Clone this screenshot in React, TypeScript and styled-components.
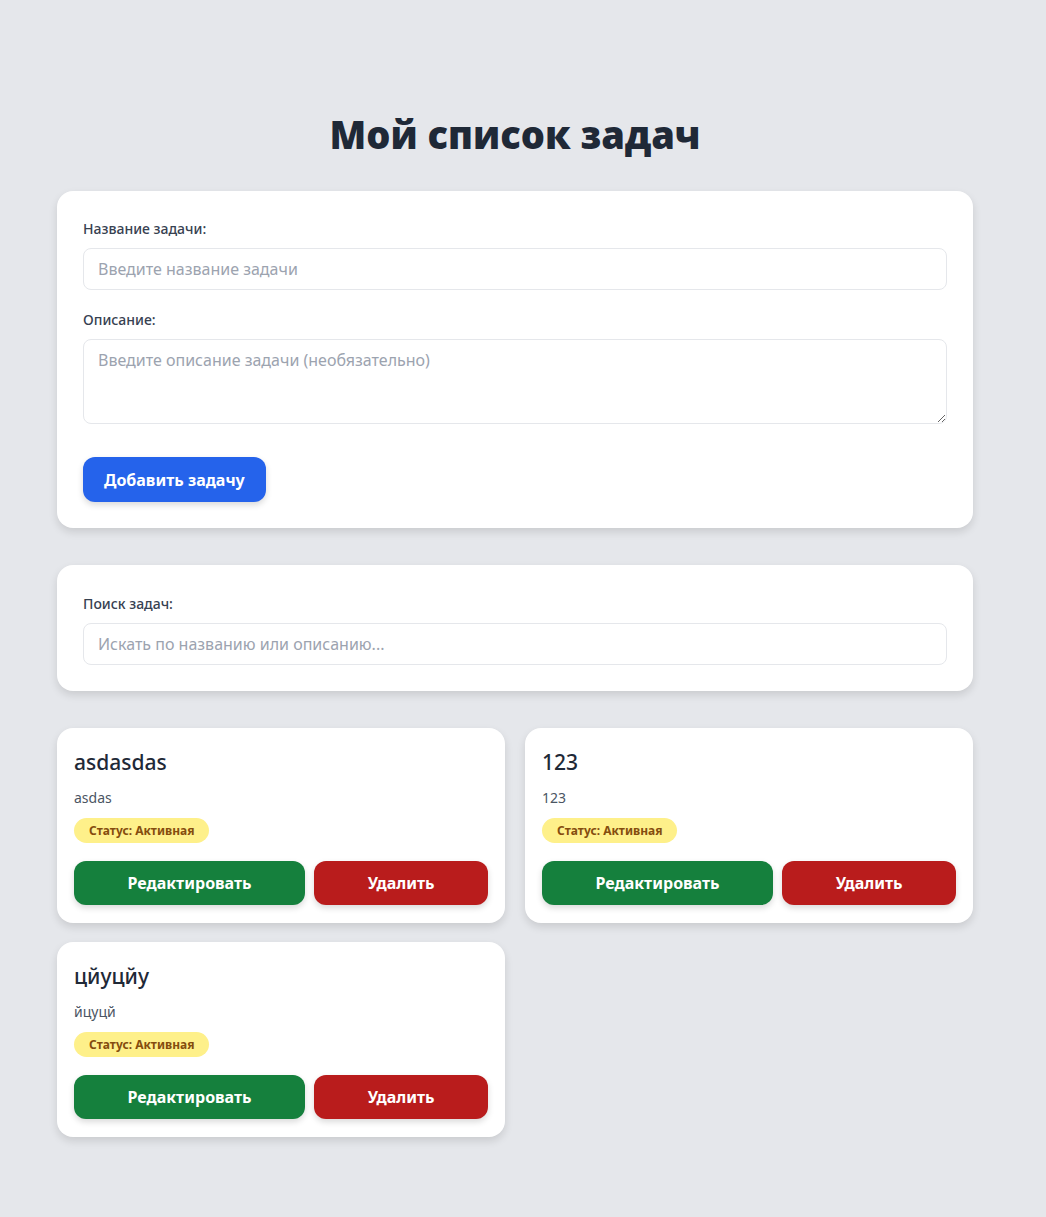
import React from "react";
import styled, { createGlobalStyle } from "styled-components";

const Global = createGlobalStyle`
  html, body { margin: 0; padding: 0; background: #e5e7eb; }
  body { font-family: "Noto Sans", "Open Sans", sans-serif; color: #1f2937; }
  * { box-sizing: border-box; }
`;

const Page = styled.div`
  width: 916px;
  margin-left: 57px;
  padding: 110px 0 80px;
`;

const Title = styled.h1`
  margin: 0 0 33px;
  text-align: center;
  font-family: "Open Sans", "Noto Sans", sans-serif;
  font-weight: 800;
  font-size: 38px;
  line-height: 48px;
  color: #1f2937;
`;

const Panel = styled.div<{ $padTop?: number }>`
  background: #ffffff;
  border-radius: 16px;
  padding: ${(p) => p.$padTop ?? 26}px 26px 26px;
  box-shadow: 0 4px 8px rgba(0, 0, 0, 0.12);
  margin-bottom: 37px;
`;

const Field = styled.div<{ $gap?: number }>`
  margin-bottom: ${(p) => p.$gap ?? 0}px;
`;

const Label = styled.label`
  display: block;
  font-size: 14px;
  font-weight: 500;
  line-height: 23px;
  color: #374151;
  margin-bottom: 8px;
`;

const TextInput = styled.input`
  display: block;
  width: 100%;
  height: 42px;
  border: 1px solid #e5e7eb;
  border-radius: 8px;
  padding: 0 14px;
  font-family: inherit;
  font-size: 16px;
  color: #1f2937;
  outline: none;
  &::placeholder { color: #9ca3af; }
`;

const TextArea = styled.textarea`
  display: block;
  width: 100%;
  height: 85px;
  border: 1px solid #e5e7eb;
  border-radius: 8px;
  padding: 8px 14px;
  font-family: inherit;
  font-size: 16px;
  line-height: 24px;
  color: #1f2937;
  outline: none;
  resize: vertical;
  &::placeholder { color: #9ca3af; }
`;

const PrimaryButton = styled.button`
  margin-top: 33px;
  height: 45px;
  padding: 0 21px;
  border: none;
  border-radius: 12px;
  background: #2563eb;
  color: #fff;
  font-family: inherit;
  font-weight: 700;
  font-size: 16px;
  box-shadow: 0 3px 6px rgba(0, 0, 0, 0.15);
  cursor: pointer;
`;

const Grid = styled.div`
  display: grid;
  grid-template-columns: 1fr 1fr;
  column-gap: 20px;
  row-gap: 19px;
`;

const Card = styled.div`
  background: #fff;
  border-radius: 16px;
  padding: 17px 17px 18px;
  box-shadow: 0 4px 8px rgba(0, 0, 0, 0.12);
`;

const CardTitle = styled.h3`
  margin: 0;
  font-size: 21px;
  font-weight: 500;
  line-height: 34px;
  color: #1f2937;
`;

const CardText = styled.p`
  margin: 9px 0 10px;
  font-size: 14px;
  line-height: 20px;
  color: #4b5563;
`;

const Badge = styled.span`
  display: inline-flex;
  align-items: center;
  height: 25px;
  padding: 0 15px;
  border-radius: 999px;
  background: #fef08a;
  color: #854d0e;
  font-size: 12px;
  font-weight: 700;
`;

const Actions = styled.div`
  display: flex;
  gap: 9px;
  margin-top: 18px;
`;

const ActionButton = styled.button<{ $tone: "edit" | "delete" }>`
  flex: 1 1 auto;
  height: 44px;
  padding: 0 20px;
  border: none;
  border-radius: 12px;
  background: ${(p) => (p.$tone === "edit" ? "#15803d" : "#b91c1c")};
  color: #fff;
  font-family: inherit;
  font-weight: 700;
  font-size: 16px;
  box-shadow: 0 3px 6px rgba(0, 0, 0, 0.15);
  cursor: pointer;
`;

const tasks = [
  { title: "asdasdas", desc: "asdas" },
  { title: "123", desc: "123" },
  { title: "цйуцйу", desc: "йцуцй" },
];

export default function App() {
  return (
    <>
      <Global />
      <Page>
        <Title>Мой список задач</Title>
        <Panel>
          <Field $gap={18}>
            <Label>Название задачи:</Label>
            <TextInput placeholder="Введите название задачи" />
          </Field>
          <Field>
            <Label>Описание:</Label>
            <TextArea placeholder="Введите описание задачи (необязательно)" />
          </Field>
          <PrimaryButton>Добавить задачу</PrimaryButton>
        </Panel>
        <Panel $padTop={27}>
          <Field>
            <Label>Поиск задач:</Label>
            <TextInput placeholder="Искать по названию или описанию..." />
          </Field>
        </Panel>
        <Grid>
          {tasks.map((t) => (
            <Card key={t.title}>
              <CardTitle>{t.title}</CardTitle>
              <CardText>{t.desc}</CardText>
              <Badge>Статус: Активная</Badge>
              <Actions>
                <ActionButton $tone="edit">Редактировать</ActionButton>
                <ActionButton $tone="delete">Удалить</ActionButton>
              </Actions>
            </Card>
          ))}
        </Grid>
      </Page>
    </>
  );
}
